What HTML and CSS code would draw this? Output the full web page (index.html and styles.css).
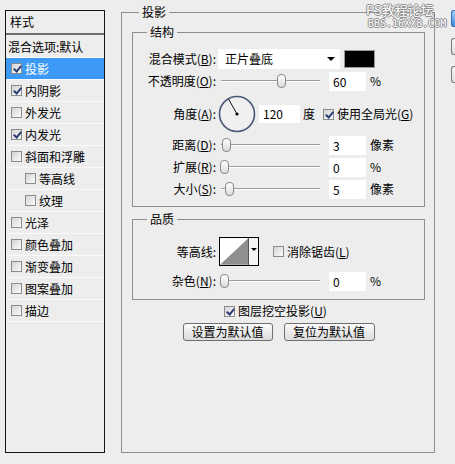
FILE: index.html
```html
<!DOCTYPE html>
<html>
  <head>
    <meta charset="UTF-8">
    <title>图层样式 - 投影</title>
    <link rel="stylesheet" href="styles.css">
  </head>
  <body>
    <div class="styles">
      <div class="styles-head">样式</div>
      <div class="item plain">混合选项:默认</div>
      <div class="item selected"><span class="chk on"></span>投影</div>
      <div class="item"><span class="chk on"></span>内阴影</div>
      <div class="item"><span class="chk"></span>外发光</div>
      <div class="item"><span class="chk on"></span>内发光</div>
      <div class="item"><span class="chk"></span>斜面和浮雕</div>
      <div class="item sub"><span class="chk"></span>等高线</div>
      <div class="item sub"><span class="chk"></span>纹理</div>
      <div class="item"><span class="chk"></span>光泽</div>
      <div class="item"><span class="chk"></span>颜色叠加</div>
      <div class="item"><span class="chk"></span>渐变叠加</div>
      <div class="item"><span class="chk"></span>图案叠加</div>
      <div class="item"><span class="chk"></span>描边</div>
    </div>

    <fieldset class="group frame">
      <legend>投影</legend>

      <fieldset class="group structure">
        <legend>结构</legend>
        <div class="row">
          <span class="lbl">混合模式(<u>B</u>):</span>
          <div class="select">正片叠底<span class="arrow"></span></div>
          <div class="swatch"></div>
        </div>
        <div class="row">
          <span class="lbl">不透明度(<u>O</u>):</span>
          <div class="slider"><span class="thumb" style="left:59px"></span></div>
          <div class="field">60</div>
          <span class="unit">%</span>
        </div>
        <div class="row tall">
          <span class="lbl">角度(<u>A</u>):</span>
          <svg class="dial" width="38" height="38" viewBox="0 0 38 38">
            <circle cx="19" cy="19" r="17.5" fill="#efefef" stroke="#4a5877" stroke-width="1.6"/>
            <line x1="19" y1="19" x2="10.5" y2="4" stroke="#111" stroke-width="1"/>
            <circle cx="19" cy="19" r="1.6" fill="#000"/>
          </svg>
          <div class="field angle">120</div>
          <span class="unit">度</span>
          <span class="chk on global"></span>
          <span class="chk-text">使用全局光(<u>G</u>)</span>
        </div>
        <div class="row">
          <span class="lbl">距离(<u>D</u>):</span>
          <div class="slider"><span class="thumb" style="left:4px"></span></div>
          <div class="field">3</div>
          <span class="unit">像素</span>
        </div>
        <div class="row">
          <span class="lbl">扩展(<u>R</u>):</span>
          <div class="slider"><span class="thumb" style="left:2px"></span></div>
          <div class="field">0</div>
          <span class="unit">%</span>
        </div>
        <div class="row">
          <span class="lbl">大小(<u>S</u>):</span>
          <div class="slider"><span class="thumb" style="left:7px"></span></div>
          <div class="field">5</div>
          <span class="unit">像素</span>
        </div>
      </fieldset>

      <fieldset class="group quality">
        <legend>品质</legend>
        <div class="row contour-row">
          <span class="lbl">等高线:</span>
          <div class="contour">
            <svg width="29" height="27" viewBox="0 0 29 27">
              <rect width="29" height="27" fill="#fff"/>
              <polygon points="0,27 29,0 29,27" fill="#8f8f8f"/>
            </svg>
            <span class="contour-drop"><span class="arrow"></span></span>
          </div>
          <span class="chk aa"></span>
          <span class="chk-text">消除锯齿(<u>L</u>)</span>
        </div>
        <div class="row noise-row">
          <span class="lbl">杂色(<u>N</u>):</span>
          <div class="slider"><span class="thumb" style="left:2px"></span></div>
          <div class="field">0</div>
          <span class="unit">%</span>
        </div>
      </fieldset>

      <div class="knockout"><span class="chk on"></span><span class="chk-text">图层挖空投影(<u>U</u>)</span></div>
      <div class="actions">
        <div class="btn">设置为默认值</div>
        <div class="btn wide">复位为默认值</div>
      </div>
    </fieldset>

    <div class="dlg-buttons">
      <span class="dlg-btn blue"></span>
      <span class="dlg-btn"></span>
      <span class="dlg-btn"></span>
    </div>

    <div class="watermark">
      <div class="wm-top">PS教程论坛</div>
      <div class="wm-bottom">BBS.16XX8.COM</div>
    </div>
  </body>
</html>
```

FILE: styles.css
```css
html, body {
  margin:0;
  overflow:hidden;
}
body {
  width:455px;
  height:464px;
  display:flex;
  align-items:flex-start;
  background-color:#ededed;
  font-family:"Noto Sans CJK SC", "Noto Sans", sans-serif;
  font-size:12px;
  line-height:16px;
  color:#000;
}
u {
  text-decoration-thickness:1px;
  text-underline-offset:1px;
}

/* left list */
.styles {
  flex-shrink:0;
  box-sizing:border-box;
  width:100px;
  height:443px;
  margin:10px 0 0 5px;
  border:1px solid #141414;
}
.styles-head {
  height:22px;
  line-height:22px;
  padding-left:4px;
  border-bottom:2px solid #6e6e6e;
  margin-bottom:1px;
}
.item {
  height:21px;
  border-bottom:1px solid #fbfbfb;
  display:flex;
  align-items:center;
  gap:3px;
  padding-left:5px;
}
.item.plain {
  padding-left:2px;
}
.item.sub {
  padding-left:19px;
}
.item.selected {
  background-color:#3d99f6;
  color:#ffffff;
}

/* checkbox */
.chk {
  position:relative;
  flex-shrink:0;
  box-sizing:border-box;
  width:11px;
  height:11px;
  border:1px solid #8c8c8c;
  background:linear-gradient(135deg, #d4d4d4, #fbfbfb);
}
.chk.on::after {
  content:"";
  position:absolute;
  left:3px;
  top:0px;
  width:3px;
  height:6px;
  border:solid #2b3d73;
  border-width:0 2px 2px 0;
  transform:rotate(40deg);
}
.chk-text {
  margin-left:3px;
}

/* group boxes */
.group {
  margin:0;
  padding:0;
  min-width:0;
  border:1px solid #8e8e8e;
}
.group legend {
  padding:0 3px;
  margin-left:14px;
  line-height:16px;
}
.frame {
  flex-shrink:0;
  box-sizing:border-box;
  width:314px;
  height:449px;
  margin:4px 0 0 16px;
  padding:0 9px 0 10px;
}
.frame > legend {
  margin-left:7px;
}
.structure {
  margin-top:4px;
  padding:8px 0 6px 0;
}
.quality {
  margin-top:4px;
  padding:10px 0 8px 0;
}

/* rows */
.row {
  display:flex;
  align-items:center;
  height:22px;
}
.row.tall {
  height:40px;
  margin-top:2px;
}
.lbl {
  flex-shrink:0;
  width:83px;
  padding-right:2px;
  text-align:right;
}
.select {
  position:relative;
  box-sizing:border-box;
  width:122px;
  height:20px;
  line-height:20px;
  padding-left:7px;
  background-color:#ffffff;
}
.arrow {
  position:absolute;
  right:5px;
  top:8px;
  border-left:4px solid transparent;
  border-right:4px solid transparent;
  border-top:4px solid #000;
}
.swatch {
  box-sizing:border-box;
  width:31px;
  height:18px;
  margin-left:4px;
  border:1px solid #9a9a9a;
  background-color:#000000;
}
.slider {
  position:relative;
  flex-shrink:0;
  width:104px;
  height:20px;
  margin-right:7px;
}
.slider::before {
  content:"";
  position:absolute;
  left:3px;
  right:2px;
  top:9px;
  height:1px;
  background-color:#9c9c9c;
  border-bottom:1px solid #ffffff;
}
.thumb {
  position:absolute;
  top:3px;
  box-sizing:border-box;
  width:9px;
  height:14px;
  border:1px solid #8a8a8a;
  border-radius:4px;
  background:linear-gradient(#ffffff, #dadada);
}
.field {
  box-sizing:border-box;
  width:37px;
  height:19px;
  line-height:19px;
  padding-left:4px;
  background-color:#ffffff;
}
.field.angle {
  width:41px;
  height:18px;
  line-height:18px;
  margin-left:3px;
}
.unit {
  margin-left:4px;
}
.row.tall .unit {
  margin-left:3px;
}
.chk.global {
  margin-left:8px;
}

/* quality */
.contour-row {
  height:29px;
}
.noise-row {
  height:20px;
  margin-top:5px;
}
.contour {
  display:flex;
  box-sizing:border-box;
  width:40px;
  height:29px;
  margin-left:1px;
  border:1px solid #000;
}
.contour-drop {
  position:relative;
  width:9px;
  border-left:1px solid #555;
  background-color:#f4f4f4;
}
.contour-drop .arrow {
  right:1px;
  top:10px;
  border-left-width:3px;
  border-right-width:3px;
  border-top-width:3px;
}
.chk.aa {
  margin-left:14px;
}

.knockout {
  display:flex;
  align-items:center;
  justify-content:center;
  height:16px;
  margin-top:3px;
  padding-right:6px;
}
.actions {
  display:flex;
  justify-content:center;
  gap:11px;
  margin-top:4px;
}
.btn {
  box-sizing:border-box;
  width:90px;
  height:18px;
  line-height:16px;
  text-align:center;
  border:1px solid #6f6f6f;
  border-radius:3px;
  background:linear-gradient(#fafafa, #dcdcdc);
}
.btn.wide {
  width:91px;
}

/* dialog buttons, only their left edge shows */
.dlg-buttons {
  flex-shrink:0;
  display:flex;
  flex-direction:column;
  gap:11px;
  margin:10px 0 0 16px;
}
.dlg-btn {
  box-sizing:border-box;
  width:4px;
  height:17px;
  border:1px solid #7a7a7a;
  border-right:none;
  border-radius:3px 0 0 3px;
  background:linear-gradient(#f7f7f7, #dedede);
}
.dlg-btn.blue {
  border-color:#2f6fb5;
  background:linear-gradient(#9fd0f7, #3c8de0);
}

.watermark {
  position:absolute;
  left:366px;
  top:2px;
  color:#ffffff;
  text-shadow:1px 0 #8a8a8a, -1px 0 #8a8a8a, 0 1px #8a8a8a, 0 -1px #8a8a8a;
}
.wm-top {
  font-size:13px;
  line-height:16px;
}
.wm-bottom {
  font-family:"DejaVu Sans Mono", monospace;
  font-size:10px;
  line-height:11px;
  padding-left:2px;
}
```
